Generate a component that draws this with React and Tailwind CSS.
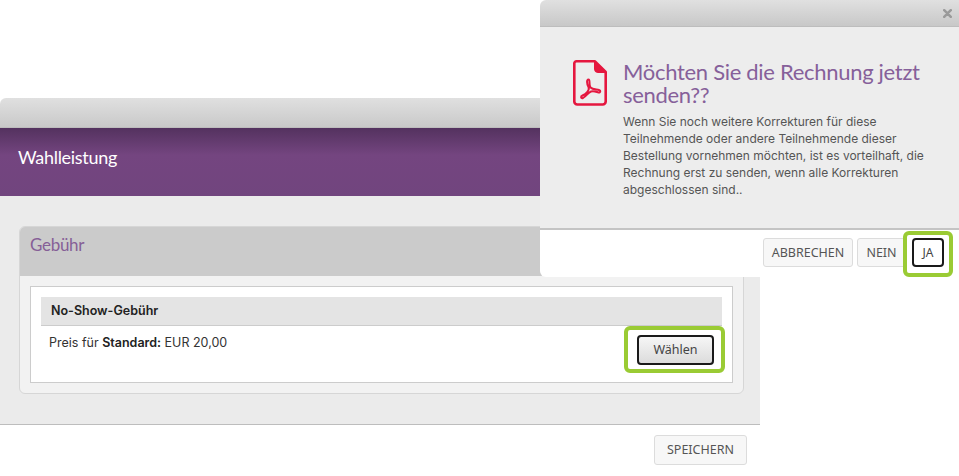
const heading = { fontFamily: 'Lato, sans-serif', letterSpacing: '-0.3px' };

function PdfIcon() {
  return (
    <svg width="34" height="46" viewBox="0 0 34 46" fill="none" className="shrink-0">
      <path d="M3.500 1.300H22L32.700 12V41.500a3 3 0 0 1-3 3H4.300a3 3 0 0 1-3-3V3.500a2.200 2.200 0 0 1 2.200-2.200Z" stroke="#e5173f" strokeWidth="2.600" strokeLinejoin="round" />
      <path d="M21.500 1.300L32.700 12.500H25a3.500 3.500 0 0 1-3.500-3.500Z" fill="#e5173f" stroke="#e5173f" strokeLinejoin="round" />
      <path d="M15.500 19.500C13.500 19.500 13.700 23.500 15.500 27C17 30 13 34 9.500 35.500C7.200 36.500 8 39 10 38C13.500 36 15 32.500 18 31.500C21 30.500 23.500 32 25.500 32.500C27.500 33 28 30.500 26 30C23 29.300 19.500 29.500 17.500 27.500C15.500 25 17.500 19.500 15.500 19.500Z" stroke="#e5173f" strokeWidth="2" strokeLinejoin="round" />
    </svg>
  );
}

function Btn({ children, className = "" }) {
  return (
    <button className={`flex items-center justify-center rounded-[3px] border border-[#dcdcdc] bg-[#f7f7f7] text-[12.5px] text-[#555555] font-['Noto_Sans',sans-serif] ${className}`}>
      {children}
    </button>
  );
}

export default function App() {
  return (
    <div className="relative h-[476px] w-[959px] overflow-hidden bg-white font-['Inter',sans-serif]">
      <div className="pt-[98px]">
        <div className="w-[760px]">
          <div className="h-[30px] rounded-tl-[6px] border-b border-[#bdbdbd] bg-gradient-to-b from-[#e0e0e0] to-[#c9c9c9]" />
          <div className="flex h-[68px] items-start bg-gradient-to-b from-[#54325f] from-0% via-[#744580] via-[40%] to-[#71457e] px-[18px] pt-[15px]">
            <h1 style={heading} className="text-[18px] leading-[28px] text-white">Wahlleistung</h1>
          </div>
          <div className="h-[228px] bg-[#ebebeb] px-[19px] pt-[30px]">
            <section className="h-[168px] w-[725px] overflow-hidden rounded-[6px] border border-[#d6d6d6] bg-[#f2f2f2]">
              <div className="-m-px h-[50px] bg-[#cbcbcb] px-[11px] pt-[7px]">
                <h2 style={heading} className="text-[17px] leading-[24px] text-[#865f97]">Gebühr</h2>
              </div>
              <div className="mx-[10px] mt-[11px] h-[97px] border border-[#cccccc] bg-white px-[10px] pt-[10px]">
                <div className="flex h-[29px] items-center border-b border-[#cccccc] bg-[#e4e4e4] px-[10px] text-[12.5px] font-semibold text-[#222222]">
                  No-Show-Gebühr
                </div>
                <div className="flex items-start justify-between pl-[8px] pr-[8px] pt-[8px]">
                  <p className="text-[12.5px] leading-[18px] text-[#333333]">
                    Preis für <strong className="font-semibold text-[#222222]">Standard:</strong> EUR 20,00
                  </p>
                  <div className="relative mt-px">
                    <button className="h-[30px] w-[77px] rounded-[4px] border-2 border-[#1a1a1a] bg-gradient-to-b from-[#f6f6f6] to-[#dcdcdc] text-[12.5px] text-[#444444] font-['Noto_Sans',sans-serif]">
                      Wählen
                    </button>
                    <div className="absolute -left-[13px] -right-[11px] -top-[9px] -bottom-[8px] rounded-[6px] border-4 border-[#9acb34]" />
                  </div>
                </div>
              </div>
            </section>
          </div>
          <div className="flex h-[52px] items-start justify-end border-t border-[#bdbdbd] bg-white pr-[13px] pt-[10px]">
            <Btn className="h-[30px] w-[93px]">SPEICHERN</Btn>
          </div>
        </div>
      </div>

      <div className="absolute left-[540px] top-0 h-[277px] w-[419px] rounded-tl-[6px] rounded-bl-[6px] bg-white">
        <div className="flex h-[27px] items-center justify-end rounded-tl-[6px] border-b border-[#bdbdbd] bg-gradient-to-b from-[#e0e0e0] to-[#c8c8c8] pr-[7px]">
          <svg width="9" height="9" viewBox="0 0 9 9">
            <path d="M1.200 1.200L7.800 7.800M7.800 1.200L1.200 7.800" stroke="#9a9a9a" strokeWidth="2.500" strokeLinecap="round" />
          </svg>
        </div>
        <div className="flex h-[201px] gap-[16px] bg-[#ededed] pl-[33px] pr-[30px] pt-[33px]">
          <PdfIcon />
          <div>
            <h2 style={heading} className="text-[22px] leading-[23px] text-[#86609a]">Möchten Sie die Rechnung jetzt senden??</h2>
            <p className="mt-[7px] text-[12px] leading-[17px] text-[#555555]">
              Wenn Sie noch weitere Korrekturen für diese Teilnehmende oder andere Teilnehmende dieser Bestellung vornehmen möchten, ist es vorteilhaft, die Rechnung erst zu senden, wenn alle Korrekturen abgeschlossen sind..
            </p>
          </div>
        </div>
        <div className="flex items-start justify-end gap-[4px] border-t-2 border-[#c4c4c4] pr-[15px] pt-[8px]">
          <Btn className="h-[29px] w-[90px] pt-px">ABBRECHEN</Btn>
          <Btn className="h-[29px] w-[49px] pt-px">NEIN</Btn>
          <div className="relative ml-[2px]">
            <button className="h-[29px] w-[32px] rounded-[4px] border-2 border-[#1a1a1a] bg-white text-[12px] text-[#444444] font-['Noto_Sans',sans-serif]">JA</button>
            <div className="absolute -left-[9px] -right-[9px] -top-[7px] -bottom-[10px] rounded-[6px] border-4 border-[#9acb34]" />
          </div>
        </div>
      </div>
    </div>
  );
}
